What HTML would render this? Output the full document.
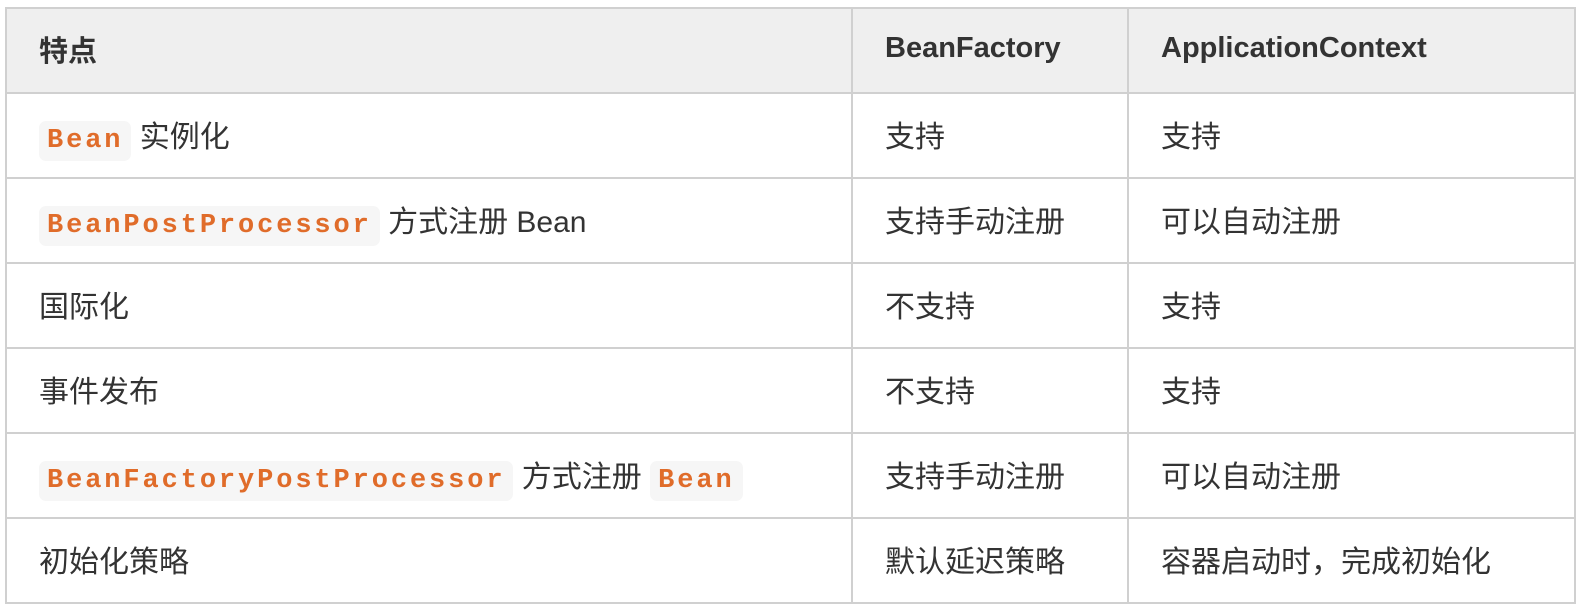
<!DOCTYPE html>
<html><head><meta charset="utf-8"><style>
body{margin:0;background:#fff;}
table{position:absolute;left:5px;top:7px;width:1569px;border-collapse:collapse;font-family:"Liberation Sans","Noto Sans CJK SC",sans-serif;font-size:30px;color:#333;table-layout:fixed;}
td,th{border:2px solid #d0d0d0;padding:0 0 4px 32px;height:79px;text-align:left;vertical-align:middle;white-space:nowrap;}
th{background:#efefef;font-weight:bold;font-size:29px;}
code{font-family:"Liberation Mono",monospace;font-size:27px;font-weight:bold;color:#e06c2a;background:#f6f6f6;border-radius:7px;padding:5px 8px;letter-spacing:2.9px;}
</style></head><body>
<table>
<colgroup><col style="width:846px"><col style="width:276px"><col style="width:447px"></colgroup>
<tr><th>特点</th><th>BeanFactory</th><th>ApplicationContext</th></tr>
<tr><td><code>Bean</code> 实例化</td><td>支持</td><td>支持</td></tr>
<tr><td><code>BeanPostProcessor</code> 方式注册 Bean</td><td>支持手动注册</td><td>可以自动注册</td></tr>
<tr><td>国际化</td><td>不支持</td><td>支持</td></tr>
<tr><td>事件发布</td><td>不支持</td><td>支持</td></tr>
<tr><td><code>BeanFactoryPostProcessor</code> 方式注册 <code>Bean</code></td><td>支持手动注册</td><td>可以自动注册</td></tr>
<tr><td>初始化策略</td><td>默认延迟策略</td><td>容器启动时，完成初始化</td></tr>
</table>
</body></html>
